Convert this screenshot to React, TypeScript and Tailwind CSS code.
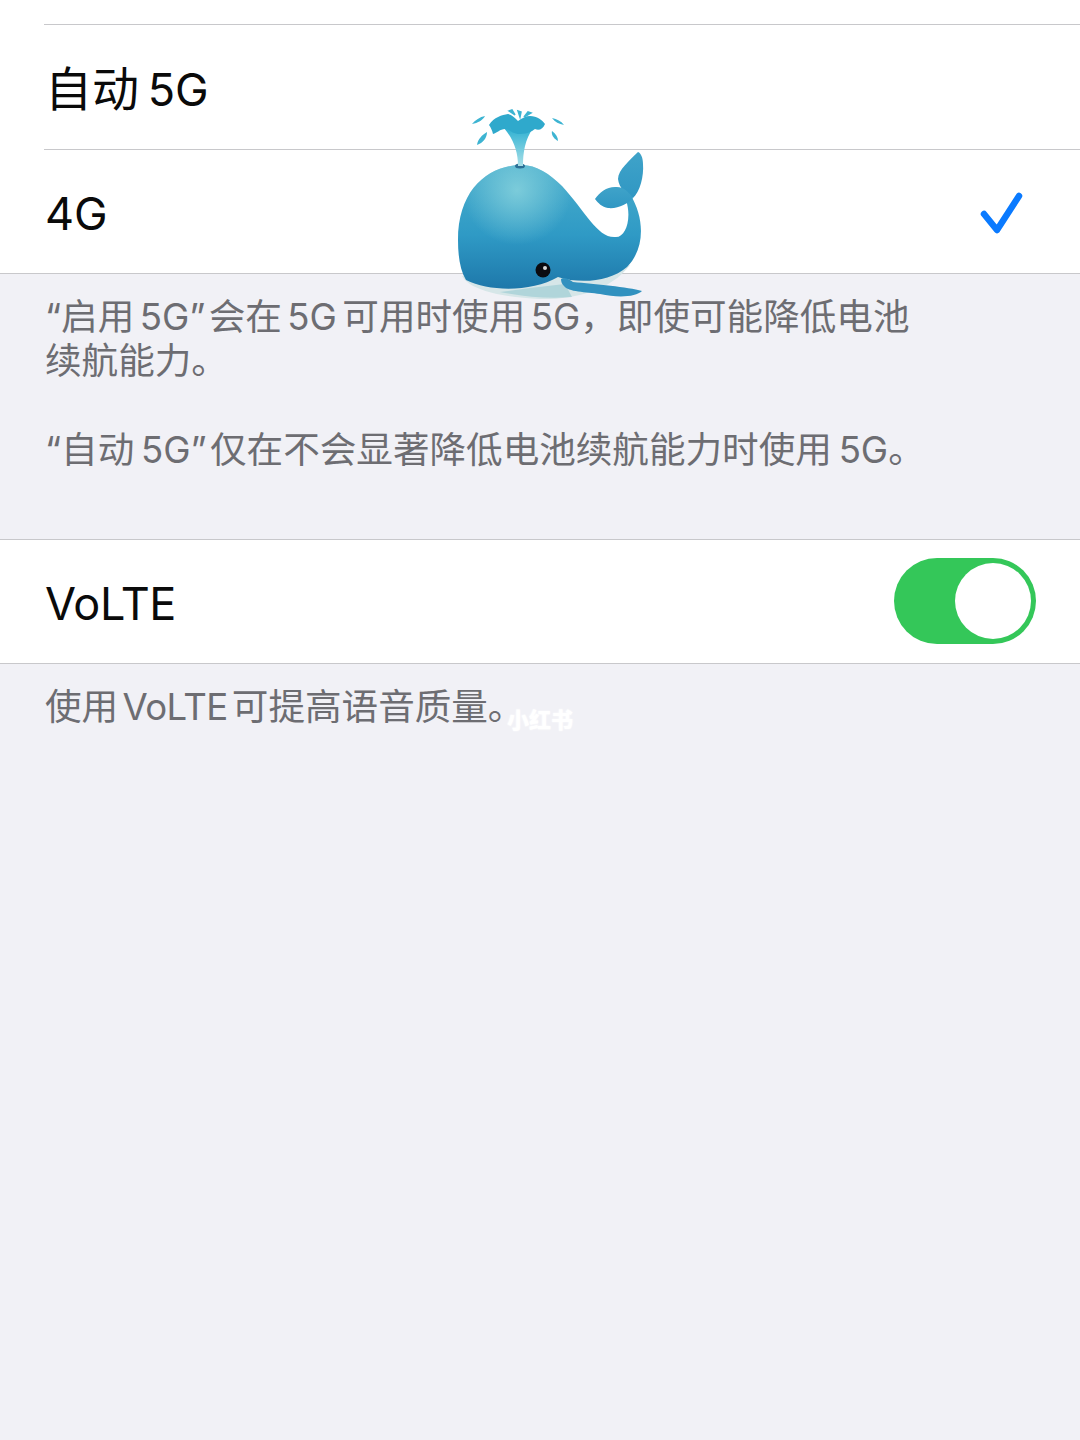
const sans = "font-['Inter','Noto_Sans_CJK_SC',sans-serif]"

const whaleBody =
  'M82 65 C50 65 18 88 18 140 C18 156 20 170 26 180 C50 192 92 192 118 177 C140 184 170 182 187 167 C204 150 206 120 190 94 L186 100 C192 118 186 137 176 137 C158 139 146 112 122 86 C110 74 96 65 82 65 Z'

function Whale() {
  return (
    <svg viewBox="0 0 220 210" className="h-[210px] w-[220px]">
      <defs>
        <linearGradient id="whaleBody" gradientUnits="userSpaceOnUse" x1="0" y1="65" x2="0" y2="192">
          <stop offset="0" stopColor="#4aaecd" />
          <stop offset="0.55" stopColor="#2f9ac5" />
          <stop offset="1" stopColor="#1d76a9" />
        </linearGradient>
        <radialGradient id="whaleHighlight" gradientUnits="userSpaceOnUse" cx="77" cy="90" r="55">
          <stop offset="0" stopColor="#86d2dd" stopOpacity="0.85" />
          <stop offset="1" stopColor="#86d2dd" stopOpacity="0" />
        </radialGradient>
        <linearGradient id="whaleTail" x1="0" y1="0" x2="0" y2="1">
          <stop offset="0" stopColor="#3fa3c9" />
          <stop offset="1" stopColor="#3097c3" />
        </linearGradient>
        <linearGradient id="whaleSpout" x1="0" y1="0" x2="0" y2="1">
          <stop offset="0" stopColor="#2fb1d2" />
          <stop offset="1" stopColor="#a9e0e8" />
        </linearGradient>
      </defs>
      {/* belly */}
      <path d="M22 176 C30 190 60 197 100 199 C130 200 170 192 190 165 L120 175 Z" fill="#d6e6e8" />
      <path d="M60 192 C85 197 110 199 132 197 L125 184 L90 188 Z" fill="#9fcdd4" opacity="0.7" />
      {/* body and tail stem */}
      <path d={whaleBody} fill="url(#whaleBody)" />
      <path d={whaleBody} fill="url(#whaleHighlight)" />
      {/* tail flukes */}
      <path d="M198 52 C190 60 178 70 178 79 C179 88 186 94 193 98 C200 92 204 76 203 64 C203 58 201 53 198 52 Z" fill="url(#whaleTail)" />
      <path d="M155 99 C160 92 166 87 175 87 C183 86 189 92 193 98 C188 104 178 109 168 108 C162 107 158 103 155 99 Z" fill="url(#whaleTail)" />
      {/* flipper */}
      <path d="M121 179 C125 176 130 180 133 182 C155 184 188 187 202 191 C196 197 178 198 160 194 C146 192 128 192 124 186 C122 184 121 182 121 179 Z" fill="#3191bf" />
      {/* eye */}
      <circle cx="103" cy="170" r="7.5" fill="#0b0b10" />
      <circle cx="105" cy="168" r="2" fill="#d8d8d8" />
      {/* blowhole and spout */}
      <ellipse cx="80" cy="66" rx="5" ry="2.5" fill="#2a6f95" />
      <path d="M78 66 C78 52 74 40 64 28 L93 28 C85 40 83 52 83 66 Z" fill="url(#whaleSpout)" />
      <path d="M49 25 C54 17 62 15 68 14 C72 15 75 18 78 21 C82 18 86 16 90 16 C97 16 102 20 105 24 C103 29 99 31 95 29 C92 31 88 34 80 34 C72 34 70 29 65 29 C60 29 57 33 53 34 C52 30 51 28 49 25 Z" fill="#2fa9cc" />
      <path d="M32 24 C35 20 40 17 45 16 C43 20 38 23 32 24 Z M124 25 C121 21 117 19 112 18 C115 22 119 24 124 25 Z" fill="#3db4d2" />
      <path d="M37 45 C38 39 42 35 47 32 C47 38 43 43 37 45 Z M118 41 C118 37 116 34 112 31 C111 35 114 39 118 41 Z" fill="#3db4d2" />
      <path d="M69 11 L75 15 L72 10 Z M78 11 L80 17 L81 12 Z M84 17 L91 13 L88 12 Z" fill="#3db4d2" stroke="#3db4d2" strokeWidth="1.5" />
    </svg>
  )
}

function Row({ height, children, accessory }: { height: string; children: React.ReactNode; accessory?: React.ReactNode }) {
  return (
    <div className={`flex items-center justify-between bg-white pl-[45px] ${height}`}>
      <span className="pt-[3px] text-[45px] leading-none text-[#0a0a0a] [word-spacing:-4px]">{children}</span>
      {accessory}
    </div>
  )
}

export default function App() {
  return (
    <div className={`relative h-[1440px] w-[1080px] overflow-hidden bg-[#f1f1f6] ${sans}`}>
      <div className="bg-white pl-[44px] pt-[24px]">
        <div className="h-px bg-[#c8c8cb]" />
      </div>
      <Row height="h-[124px]">
        <span className="text-[47px]">自动</span> 5G
      </Row>
      <div className="bg-white pl-[44px]">
        <div className="h-px bg-[#c8c8cb]" />
      </div>
      <Row
        height="h-[123px]"
        accessory={
          <svg viewBox="0 0 44 44" className="mr-[56px] h-[44px] w-[44px]" fill="none" stroke="#0a7aff" strokeWidth="6.5" strokeLinecap="round" strokeLinejoin="round">
            <path d="M4 24 L17 40 L39 6" />
          </svg>
        }
      >
        4G
      </Row>
      <div className="h-px bg-[#c8c8cb]" />

      <div className="h-[265px] pl-[45px] pt-[21px] text-[36.6px] leading-[44px] text-[#6d6d72]">
        <p className="w-[880px] [word-spacing:-4.8px]">
          {'“启用 5G”\u200a会在 5G 可用时使用 5G，即使可能降低电池续航能力。'}
        </p>
        <p className="mt-[45px] [word-spacing:-3.5px]">
          {'“自动 5G”\u200a仅在不会显著降低电池续航能力时使用 5G。'}
        </p>
      </div>

      <div className="h-px bg-[#c8c8cb]" />
      <Row
        height="h-[123px]"
        accessory={
          <div className="mb-[2px] mr-[44px] flex h-[86px] w-[142px] items-center justify-end rounded-full bg-[#34c759] pr-[5px]">
            <div className="h-[76px] w-[76px] rounded-full bg-white" />
          </div>
        }
      >
        <span className="tracking-[-0.4px]">VoLTE</span>
      </Row>
      <div className="h-px bg-[#c8c8cb]" />
      <p className="pl-[45px] pt-[21px] text-[36.6px] leading-[44px] text-[#6d6d72] [word-spacing:-6px]">
        使用 <span className="tracking-[-0.6px]">VoLTE</span> 可提高语音质量。
      </p>

      {/* sticker and watermark sit on top of the list */}
      <div className="absolute left-[440px] top-[100px]">
        <Whale />
      </div>
      <span className="absolute left-[507px] top-[707px] text-[22px] font-black leading-[26px] text-white [text-shadow:0_0_2px_rgba(255,255,255,0.9)]">小红书</span>
    </div>
  )
}
